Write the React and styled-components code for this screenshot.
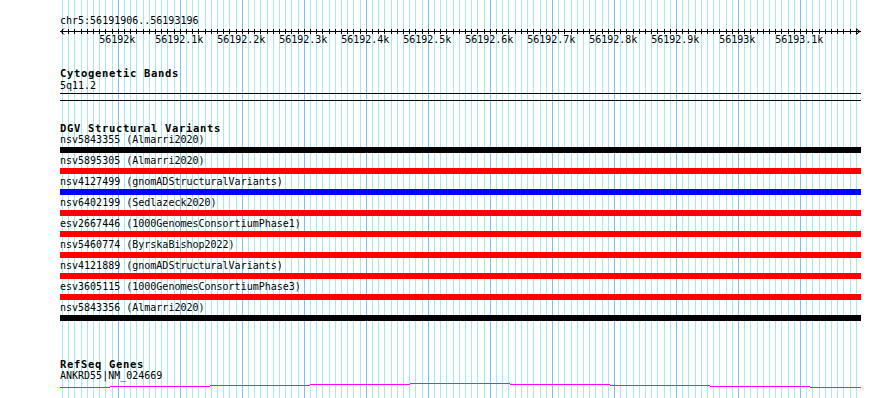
import React from "react";
import styled, { createGlobalStyle } from "styled-components";

const LEFT = 60;
const WIDTH = 801;
const PX_PER_BP = 800 / 1290;
const MAJOR0_X = 118.3; // x of 56192k
const STEP = 10 * PX_PER_BP;

const gridTicks = [];
for (let k = -9; k <= 119; k++) {
  gridTicks.push({ x: Math.floor(MAJOR0_X + k * STEP) - LEFT, major: k % 10 === 0 });
}

const axisLabels = [];
for (let m = 0; m <= 11; m++) {
  const kb = 56192 + m * 0.1;
  const text = m === 0 ? "56192k" : m === 10 ? "56193k" : `${kb.toFixed(1)}k`;
  axisLabels.push({ text, x: MAJOR0_X + m * 62 - LEFT - 1 });
}

const variants = [
  { id: "nsv5843355", src: "Almarri2020", color: "#000000" },
  { id: "nsv5895305", src: "Almarri2020", color: "#ff0000" },
  { id: "nsv4127499", src: "gnomADStructuralVariants", color: "#0000ff" },
  { id: "nsv6402199", src: "Sedlazeck2020", color: "#ff0000" },
  { id: "esv2667446", src: "1000GenomesConsortiumPhase1", color: "#ff0000" },
  { id: "nsv5460774", src: "ByrskaBishop2022", color: "#ff0000" },
  { id: "nsv4121889", src: "gnomADStructuralVariants", color: "#ff0000" },
  { id: "esv3605115", src: "1000GenomesConsortiumPhase3", color: "#ff0000" },
  { id: "nsv5843356", src: "Almarri2020", color: "#000000" },
];

// gene line segments: [xStart, xEnd, row] in page coordinates
const geneSegments = [
  [60, 110, 387],
  [110, 210, 386],
  [210, 310, 385],
  [310, 410, 384],
  [410, 510, 383],
  [510, 610, 384],
  [610, 710, 385],
  [710, 810, 386],
  [810, 861, 387],
];
const GENE_TOP = 381;

const GlobalStyle = createGlobalStyle`
  html, body {
    margin: 0;
    padding: 0;
    background: #ffffff;
  }
  body {
    width: 890px;
    height: 398px;
    overflow: hidden;
    font-family: "DejaVu Sans Mono", "Liberation Mono", monospace;
  }
`;

const Browser = styled.div`
  position: relative;
  width: 890px;
  height: 398px;
  background: #ffffff;
  overflow: hidden;
`;

const GridLayer = styled.svg`
  position: absolute;
  left: ${LEFT}px;
  top: 0;
  width: ${WIDTH}px;
  height: 398px;
  z-index: 0;
`;

const Tracks = styled.div`
  position: relative;
  z-index: 1;
  margin-left: ${LEFT}px;
  width: ${WIDTH}px;
  padding-top: 15px;
  display: flex;
  flex-direction: column;
`;

const Label = styled.div`
  font-family: "DejaVu Sans Mono", "Liberation Mono", monospace;
  font-size: 10px;
  line-height: ${(p) => p.$lh || 12}px;
  height: ${(p) => p.$lh || 12}px;
  color: #000;
  white-space: nowrap;
  margin-top: ${(p) => p.$mt || 0}px;
`;

const TrackTitle = styled.div`
  font-family: "DejaVu Sans Mono", "Liberation Mono", monospace;
  font-weight: bold;
  font-size: 10.5px;
  letter-spacing: 0.68px;
  line-height: ${(p) => p.$lh || 12}px;
  height: ${(p) => p.$lh || 12}px;
  color: #000;
  white-space: nowrap;
  margin-top: ${(p) => p.$mt || 0}px;
`;

const RulerSvg = styled.svg`
  display: block;
  width: ${WIDTH}px;
  height: 7px;
  overflow: visible;
`;

const AxisLabels = styled.div`
  position: relative;
  height: 12px;
`;

const AxisLabel = styled.span`
  position: absolute;
  top: 0;
  transform: translateX(-50%);
  font-family: "DejaVu Sans Mono", "Liberation Mono", monospace;
  font-size: 10px;
  line-height: 12px;
  color: #000;
  white-space: nowrap;
`;

const BandTrack = styled.div`
  box-sizing: border-box;
  margin-top: 1px;
  height: 8px;
  border-top: 1px solid #000;
  border-bottom: 1px solid #000;
`;

const VariantRow = styled.div`
  display: flex;
  flex-direction: column;
  padding-bottom: 2px;
`;

const Bar = styled.div`
  margin-top: 1px;
  height: 6px;
  background: ${(p) => p.$color};
`;

const GeneSvg = styled.svg`
  display: block;
  width: ${WIDTH}px;
  height: 9px;
`;

function Grid() {
  return (
    <GridLayer viewBox={`0 0 ${WIDTH} 398`} shapeRendering="crispEdges">
      {gridTicks.map((t, i) => (
        <rect
          key={i}
          x={t.x}
          y={0}
          width={1}
          height={398}
          fill={t.major ? "#7cc4ee" : "#a6e9ee"}
        />
      ))}
    </GridLayer>
  );
}

function Ruler() {
  return (
    <RulerSvg viewBox={`0 0 ${WIDTH} 7`} shapeRendering="crispEdges">
      <rect x={0} y={4} width={WIDTH} height={1} fill="#000" />
      {gridTicks.map((t, i) => (
        <rect key={i} x={t.x} y={2} width={1} height={5} fill="#000" />
      ))}
      <polyline
        points="4,1.5 1,4.5 4,7.5"
        fill="none"
        stroke="#000"
        strokeWidth="1"
        shapeRendering="auto"
      />
      <polyline
        points={`${WIDTH - 5},1.5 ${WIDTH - 1},4.5 ${WIDTH - 5},7.5`}
        fill="none"
        stroke="#000"
        strokeWidth="1"
        shapeRendering="auto"
      />
    </RulerSvg>
  );
}

function GeneModel() {
  return (
    <GeneSvg viewBox={`0 0 ${WIDTH} 9`} shapeRendering="crispEdges">
      {geneSegments.map(([a, b, row], i) => (
        <rect
          key={i}
          x={a - LEFT}
          y={row - GENE_TOP}
          width={b - a}
          height={1}
          fill="#ff00ff"
        />
      ))}
    </GeneSvg>
  );
}

export default function App() {
  return (
    <>
      <GlobalStyle />
      <Browser>
        <Grid />
        <Tracks>
          <Label>chr5:56191906..56193196</Label>
          <Ruler />
          <AxisLabels>
            {axisLabels.map((l) => (
              <AxisLabel key={l.text} style={{ left: l.x }}>
                {l.text}
              </AxisLabel>
            ))}
          </AxisLabels>

          <TrackTitle $mt={21}>Cytogenetic Bands</TrackTitle>
          <Label $mt={1}>5q11.2</Label>
          <BandTrack />

          <TrackTitle $mt={21}>DGV Structural Variants</TrackTitle>
          {variants.map((v) => (
            <VariantRow key={v.id}>
              <Label>
                {v.id} ({v.src})
              </Label>
              <Bar $color={v.color} />
            </VariantRow>
          ))}

          <TrackTitle $mt={36} $lh={10}>RefSeq Genes</TrackTitle>
          <Label $mt={2} $lh={10}>ANKRD55|NM_024669</Label>
          <GeneModel />
        </Tracks>
      </Browser>
    </>
  );
}
